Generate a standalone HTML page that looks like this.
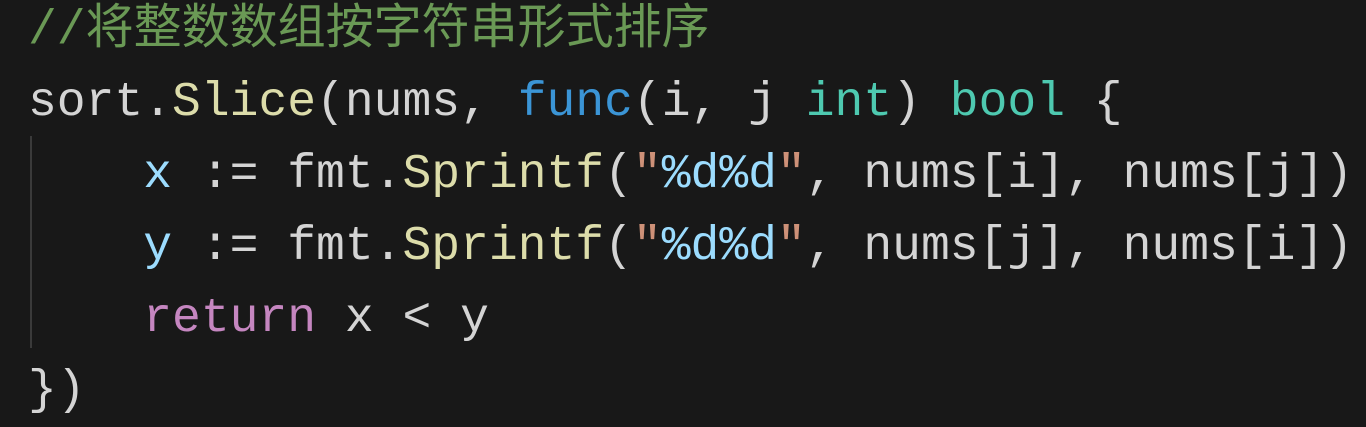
<!DOCTYPE html>
<html><head><meta charset="utf-8"><style>
html,body{margin:0;padding:0;width:1366px;height:418px;overflow:hidden;background:#181818;}
.code{position:absolute;left:28px;top:-14px;font-family:"Liberation Mono","Noto Sans CJK SC",monospace;font-size:48px;line-height:72px;color:#d4d4d4;white-space:pre;}
.c{color:#6a9955}.cj{font-family:"Noto Sans CJK SC",sans-serif;font-size:48px;}
.f{color:#dcdcaa}.k{color:#3b95d6}.t{color:#4ec9b0}.v{color:#9cdcfe}.s{color:#ce9178}.r{color:#c586c0}
.guide{position:absolute;left:30px;top:136px;width:2px;height:212px;background:#3a3a3a;}
</style></head><body>
<div class="guide"></div>
<div class="code"><span class="c">//<span class="cj">将整数数组按字符串形式排序</span></span>
sort.<span class="f">Slice</span>(nums, <span class="k">func</span>(i, j <span class="t">int</span>) <span class="t">bool</span> {
    <span class="v">x</span> := fmt.<span class="f">Sprintf</span>(<span class="s">"</span><span class="v">%d%d</span><span class="s">"</span>, nums[i], nums[j])
    <span class="v">y</span> := fmt.<span class="f">Sprintf</span>(<span class="s">"</span><span class="v">%d%d</span><span class="s">"</span>, nums[j], nums[i])
    <span class="r">return</span> x &lt; y
})</div>
</body></html>
